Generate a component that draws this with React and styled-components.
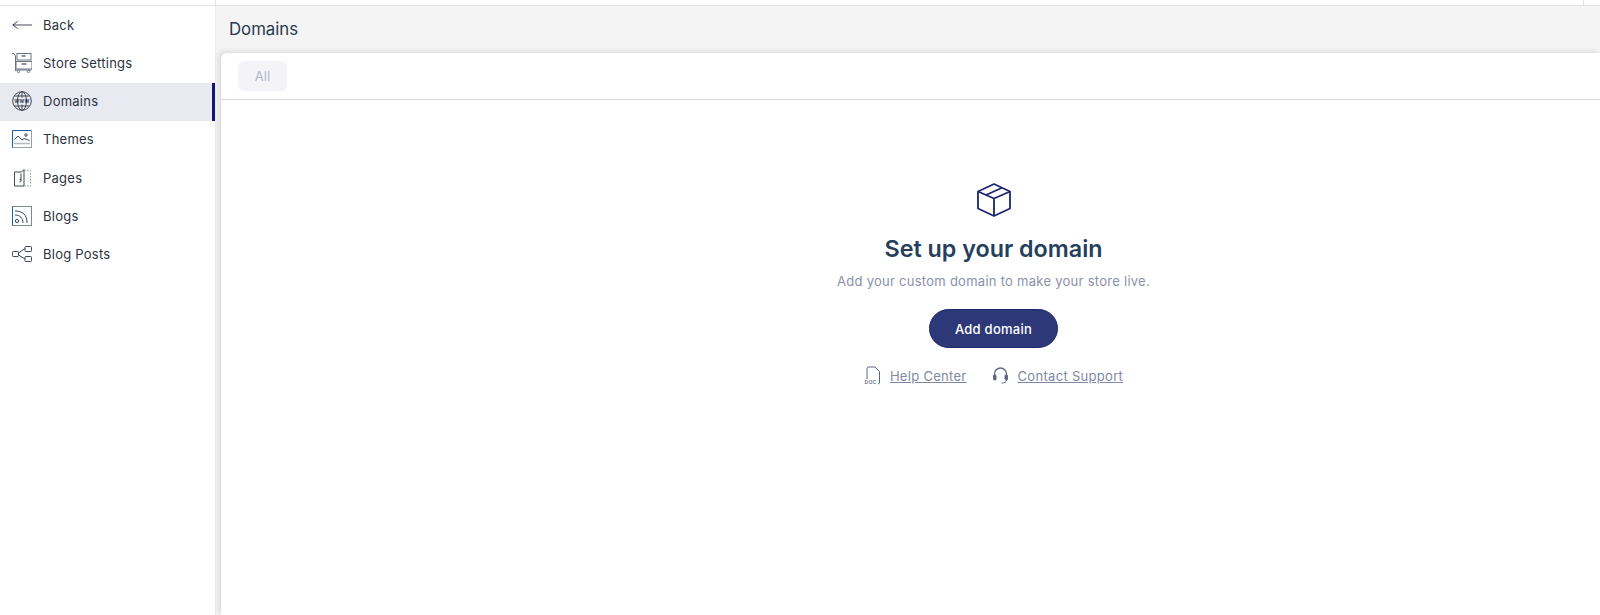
import React from "react";
import styled, { createGlobalStyle } from "styled-components";

const GlobalStyle = createGlobalStyle`
    html, body {
        margin: 0;
        height: 100%;
        overflow: hidden;
        background: #ffffff;
        font-family: "Inter", "Liberation Sans", sans-serif;
    }
`;

const Page = styled.div`
    width: 1600px;
    height: 615px;
    display: flex;
    flex-direction: column;
    overflow: hidden;
`;

const TopStrip = styled.div`
    height: 6px;
    box-sizing: border-box;
    flex: none;
    display: flex;
    justify-content: space-between;
    padding: 0 16px 0 215px;
    border-bottom: 1px solid #e4e4e6;
`;

const Tick = styled.span`
    width: 1px;
    background: #e2e2e4;
`;

const Body = styled.div`
    flex: 1;
    display: flex;
    min-height: 0;
`;

const Sidebar = styled.nav`
    width: 215px;
    flex: none;
    display: flex;
    flex-direction: column;
    padding-top: 0.4px;
`;

const NavRow = styled.a`
    height: 38.3px;
    flex: none;
    display: flex;
    align-items: center;
    gap: 11px;
    padding: 0 0 2px 12px;
    box-sizing: border-box;
    font-size: 13px;
    letter-spacing: 0.25px;
    color: #2b3340;
    background: ${(p) => (p.$active ? "#e9e9f1" : "transparent")};
    border-right: 3px solid ${(p) => (p.$active ? "#14186e" : "transparent")};
`;

const NavIcon = styled.svg`
    width: 20px;
    height: 20px;
    flex: none;
    fill: none;
    stroke: #3f4654;
    stroke-width: 1;
`;

const LightNavIcon = styled(NavIcon)`
    stroke: #6b7280;
`;

const Main = styled.main`
    flex: 1;
    min-width: 0;
    display: flex;
    flex-direction: column;
    background: #f4f4f5;
    border-left: 1px solid #ececee;
`;

const Header = styled.header`
    height: 47px;
    flex: none;
    display: flex;
    align-items: center;
    padding: 0 0 2px 13px;
    box-sizing: border-box;
    font-size: 16.8px;
    color: #29394f;
`;

const Card = styled.section`
    flex: 1;
    margin-left: 5px;
    background: #ffffff;
    border-top-left-radius: 6px;
    box-shadow: -3px -2px 5px rgba(0, 0, 0, 0.09);
    display: flex;
    flex-direction: column;
`;

const TabBar = styled.div`
    height: 47px;
    flex: none;
    padding: 8px 0 0 17px;
    box-sizing: border-box;
    border-bottom: 1px solid #dcdcde;
`;

const Tab = styled.div`
    width: 49px;
    height: 30px;
    display: flex;
    align-items: center;
    justify-content: center;
    border-radius: 6px;
    background: #f3f3f8;
    color: #b3b6cf;
    font-size: 13px;
`;

const Empty = styled.div`
    display: flex;
    flex-direction: column;
    align-items: center;
    padding: 83px 0 0 166px;
`;

const Title = styled.h2`
    margin: 17px 0 0;
    font-size: 23.3px;
    line-height: 30px;
    font-weight: 600;
    color: #263f5c;
`;

const Subtitle = styled.p`
    margin: 7px 0 0;
    font-size: 13px;
    line-height: 20px;
    letter-spacing: 0.27px;
    color: #8a91a8;
`;

const AddButton = styled.button`
    width: 129px;
    height: 39px;
    margin-top: 18px;
    border: 1px solid #1c2a6b;
    border-radius: 20px;
    background: #2d3879;
    color: #ffffff;
    font: 500 13px "Inter", sans-serif;
    letter-spacing: 0.25px;
`;

const Links = styled.div`
    display: flex;
    gap: 25px;
    margin-top: 18px;
`;

const HelpLink = styled.a`
    display: flex;
    align-items: center;
    gap: 9px;
    font-size: 13px;
    letter-spacing: 0.3px;
    color: #8088a3;
    text-decoration: underline;
`;

const LinkIcon = styled.svg`
    width: 17px;
    height: 19px;
    fill: none;
    stroke: #5d667f;
    stroke-width: 1;
`;

const IconLabel = styled.text`
    font-family: "Inter", sans-serif;
    font-weight: 600;
    stroke: none;
    fill: ${(p) => p.$color};
`;

const BoxIcon = styled.svg`
    width: 34px;
    height: 34px;
    fill: none;
    stroke: #1c2570;
    stroke-width: 1.8;
    stroke-linejoin: round;
`;

const BackIcon = () => (
    <NavIcon viewBox="0 0 20 20">
        <path d="M20 10H0.800M5.500 6.500L0.800 10l4.700 3.500" />
    </NavIcon>
);

const StoreIcon = () => (
    <LightNavIcon viewBox="0 0 20 20">
        <path d="M0 0.500h2l1.500 2.500v15" />
        <rect x="5" y="0.500" width="14" height="6.500" />
        <rect x="4" y="8.500" width="16" height="7.500" />
        <path d="M9.500 3h4M9.500 11h5" strokeWidth="1.600" />
        <path d="M3.500 17h16" />
        <circle cx="6.500" cy="18.500" r="1.200" />
        <circle cx="16.500" cy="18.500" r="1.200" />
    </LightNavIcon>
);

const GlobeIcon = () => (
    <NavIcon viewBox="0 0 20 20">
        <circle cx="10" cy="10" r="9.300" />
        <ellipse cx="10" cy="10" rx="4.500" ry="9.300" />
        <path d="M10 0.700v6M10 13.500v5.800M2.500 5h15M2.500 15h15" />
        <IconLabel x="10" y="12" textAnchor="middle" fontSize="5.600" $color="#2b3340">
            www
        </IconLabel>
    </NavIcon>
);

const ThemesIcon = () => (
    <NavIcon viewBox="0 0 20 20">
        <rect x="0.500" y="1.500" width="19" height="17" stroke="#9a9ea6" />
        <path d="M0.500 18.500V1.500H19" stroke="#1f5fa8" />
        <path d="M2.500 10.500l3.500-3.500 4 4 2-1.500 5.500 2" />
        <circle cx="14" cy="6" r="1.200" />
        <path d="M2 14.500h16" stroke="#b6bac0" strokeWidth="1.500" />
    </NavIcon>
);

const PagesIcon = () => (
    <NavIcon viewBox="0 0 20 20">
        <path d="M2.500 4h7l2.500-2.500V18H2.500z" />
        <path d="M12 2.500h6.500V18H12" strokeDasharray="1.500 1.500" stroke="#9aa0aa" />
        <path d="M9 5.500v7M7.500 14a1.500 1.500 0 1 0 0-3" />
    </NavIcon>
);

const BlogsIcon = () => (
    <NavIcon viewBox="0 0 20 20">
        <rect x="0.500" y="0.500" width="19" height="19" stroke="#7d8794" />
        <path d="M0.500 0.500v19" stroke="#1f5fa8" />
        <circle cx="5" cy="15" r="1.600" />
        <path d="M3 9c5 0 8 3 8 8M3 5c8 0 12 4 12 12" />
    </NavIcon>
);

const PostsIcon = () => (
    <NavIcon viewBox="0 0 20 20">
        <rect x="0.500" y="7.500" width="6" height="5" rx="0.800" />
        <rect x="13" y="2.500" width="6.500" height="5" rx="0.800" />
        <rect x="13" y="12.500" width="6.500" height="5" rx="0.800" />
        <path d="M6.500 9l6.500-4.500M6.500 11l6.500 4" />
    </NavIcon>
);

const navItems = [
    { label: "Back", Icon: BackIcon },
    { label: "Store Settings", Icon: StoreIcon },
    { label: "Domains", Icon: GlobeIcon, active: true },
    { label: "Themes", Icon: ThemesIcon },
    { label: "Pages", Icon: PagesIcon },
    { label: "Blogs", Icon: BlogsIcon },
    { label: "Blog Posts", Icon: PostsIcon },
];

const App = () => {
    return (
        <Page>
            <GlobalStyle />
            <TopStrip>
                <Tick />
                <Tick />
            </TopStrip>
            <Body>
                <Sidebar>
                    {navItems.map(({ label, Icon, active }) => (
                        <NavRow key={label} $active={active}>
                            <Icon />
                            {label}
                        </NavRow>
                    ))}
                </Sidebar>
                <Main>
                    <Header>Domains</Header>
                    <Card>
                        <TabBar>
                            <Tab>All</Tab>
                        </TabBar>
                        <Empty>
                            <BoxIcon viewBox="0 0 34 34">
                                <path d="M17 1L33 8.500V25.500L17 33L1 25.500V8.500Z" />
                                <path d="M1 8.500L17 15.500L33 8.500M17 15.500V33" />
                                <path d="M9 12L25 4.700" />
                            </BoxIcon>
                            <Title>Set up your domain</Title>
                            <Subtitle>Add your custom domain to make your store live.</Subtitle>
                            <AddButton>Add domain</AddButton>
                            <Links>
                                <HelpLink>
                                    <LinkIcon viewBox="0 0 17 19">
                                        <path d="M3 13V2.500Q3 1 4.500 1H11l4.500 4.500V16q0 2-1.500 2" />
                                        <IconLabel x="0.500" y="18" fontSize="5" $color="#5d667f">
                                            DOC
                                        </IconLabel>
                                    </LinkIcon>
                                    Help Center
                                </HelpLink>
                                <HelpLink>
                                    <LinkIcon viewBox="0 0 17 19">
                                        <path d="M2.500 11V8a6 6 0 0 1 12 0v3" strokeWidth="1.300" />
                                        <rect x="1.500" y="9" width="2.500" height="5" rx="1" fill="#5d667f" />
                                        <rect x="13" y="9" width="2.500" height="5" rx="1" fill="#5d667f" />
                                        <path d="M14.500 14c0 2-2 3-5 3" />
                                    </LinkIcon>
                                    Contact Support
                                </HelpLink>
                            </Links>
                        </Empty>
                    </Card>
                </Main>
            </Body>
        </Page>
    );
};

export default App;
